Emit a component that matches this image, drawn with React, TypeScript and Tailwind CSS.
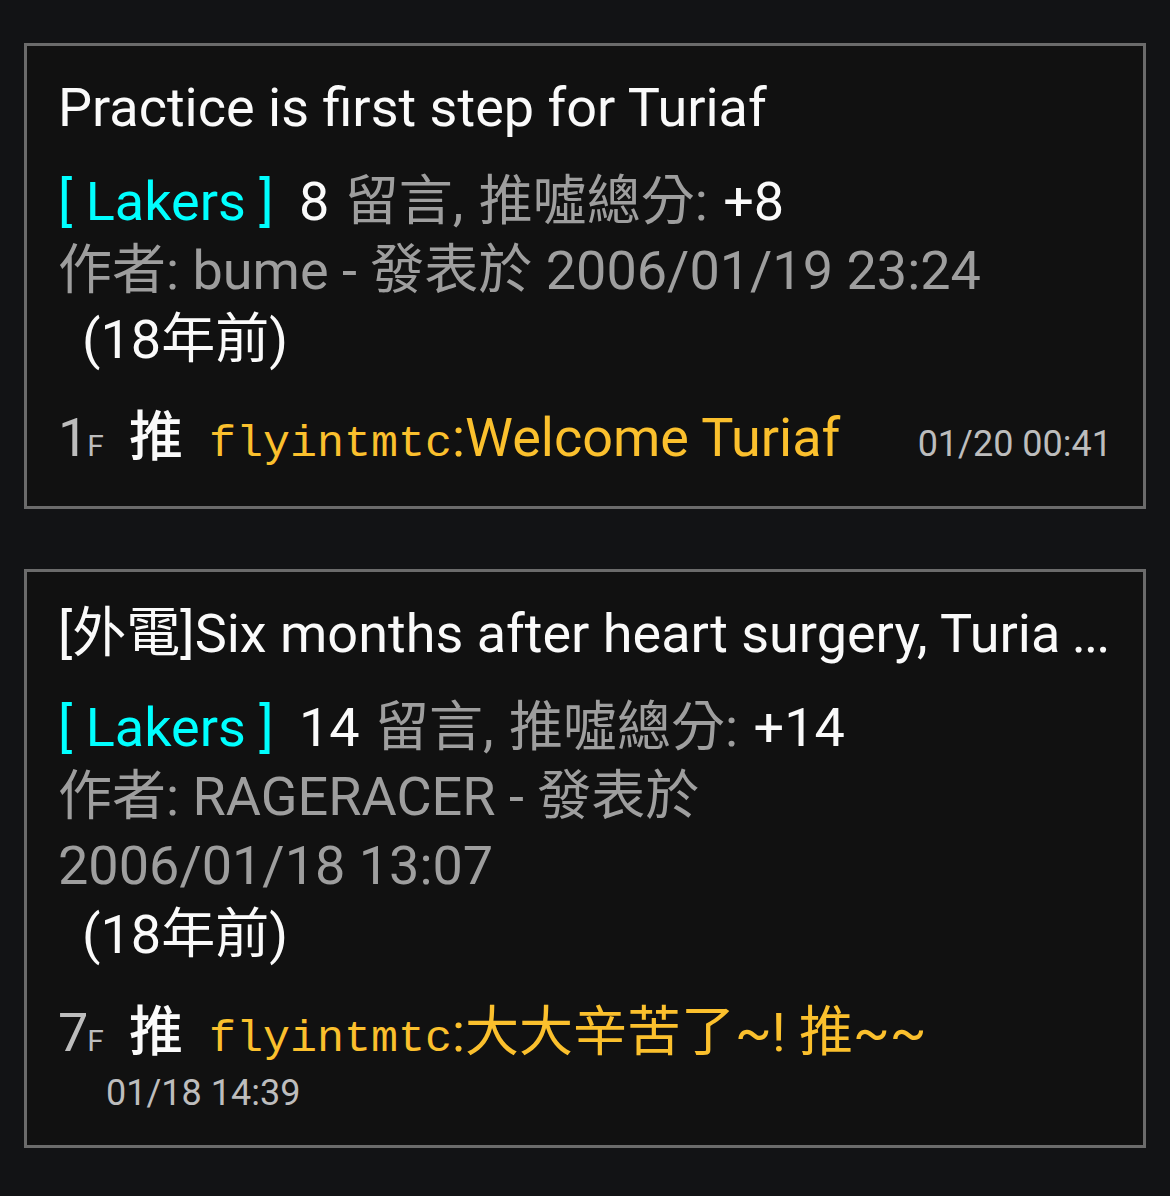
import React from "react";

const sans = { fontFamily: 'Roboto, "Noto Sans CJK TC", sans-serif' };
const mono = { fontFamily: '"Liberation Mono", "Noto Sans CJK TC", monospace' };

type Post = {
  title: string;
  board: string;
  count: string;
  score: string;
  author: string;
  date: string;
  ago: string;
  floor: string;
  tag: string;
  user: string;
  content: string;
  time: string;
  truncated?: boolean;
};

const posts: Post[] = [
  {
    title: "Practice is first step for Turiaf",
    board: "Lakers",
    count: "8",
    score: "+8",
    author: "bume",
    date: "2006/01/19 23:24",
    ago: "(18年前)",
    floor: "1",
    tag: "推",
    user: "flyintmtc",
    content: ":Welcome Turiaf",
    time: "01/20 00:41",
  },
  {
    title: "[外電]Six months after heart surgery, Turia",
    truncated: true,
    board: "Lakers",
    count: "14",
    score: "+14",
    author: "RAGERACER",
    date: "2006/01/18 13:07",
    ago: "(18年前)",
    floor: "7",
    tag: "推",
    user: "flyintmtc",
    content: ":大大辛苦了~! 推~~",
    time: "01/18 14:39",
  },
];

function Card({ p }: { p: Post }) {
  return (
    <div className="border-[3px] border-[#6b6b6b] bg-[#111111] px-[31px] pt-[30px] pb-[24px]">
      <div className="text-[54px] leading-[64px] text-[#fafafa] whitespace-nowrap">
        {p.title}
        {p.truncated && <span className="tracking-[-2px]"> ...</span>}
      </div>
      <div className="mt-[27px] text-[54px] leading-[69px] text-[#9e9e9e] [word-spacing:2px]">
        <span className="text-[#00ffff] mr-[10px] [word-spacing:0px]">[ {p.board} ]</span>{" "}
        <span className="text-[#fafafa]">{p.count}</span> 留言, 推噓總分:{" "}
        <span className="text-[#fafafa]">{p.score}</span>
      </div>
      <div className="text-[54px] leading-[69px] text-[#9e9e9e]">
        作者: {p.author} - 發表於{" "}
        <span className="whitespace-nowrap">{p.date}</span>
      </div>
      <div className="text-[54px] leading-[69px] text-[#fafafa] pl-[24px]">{p.ago}</div>
      <div className="mt-[32px] flex flex-wrap items-baseline justify-between">
        <div className="pb-[12px] text-[54px] leading-[64px] whitespace-nowrap">
          <span className="text-[#bdbdbd]">{p.floor}</span>
          <span className="ml-[-1px] text-[30px] leading-none text-[#bdbdbd]">F</span>
          <span className="ml-[25px] text-[#fafafa] font-medium">{p.tag}</span>
          <span className="ml-[26px] text-[45px] leading-none text-[#fbc02d]" style={mono}>
            {p.user}
          </span>
          <span className="text-[#fbc02d]">{p.content}</span>
        </div>
        <div className="mt-[-12px] pl-[48px] text-[36px] leading-[56px] text-[#bdbdbd] whitespace-nowrap">
          {p.time}
        </div>
      </div>
    </div>
  );
}

export default function App() {
  return (
    <div className="min-h-[1196px] bg-[#121315] px-[24px] pt-[43px] pb-[40px]" style={sans}>
      <div className="flex flex-col gap-[60px]">
        {posts.map((p, i) => (
          <Card key={i} p={p} />
        ))}
      </div>
    </div>
  );
}
